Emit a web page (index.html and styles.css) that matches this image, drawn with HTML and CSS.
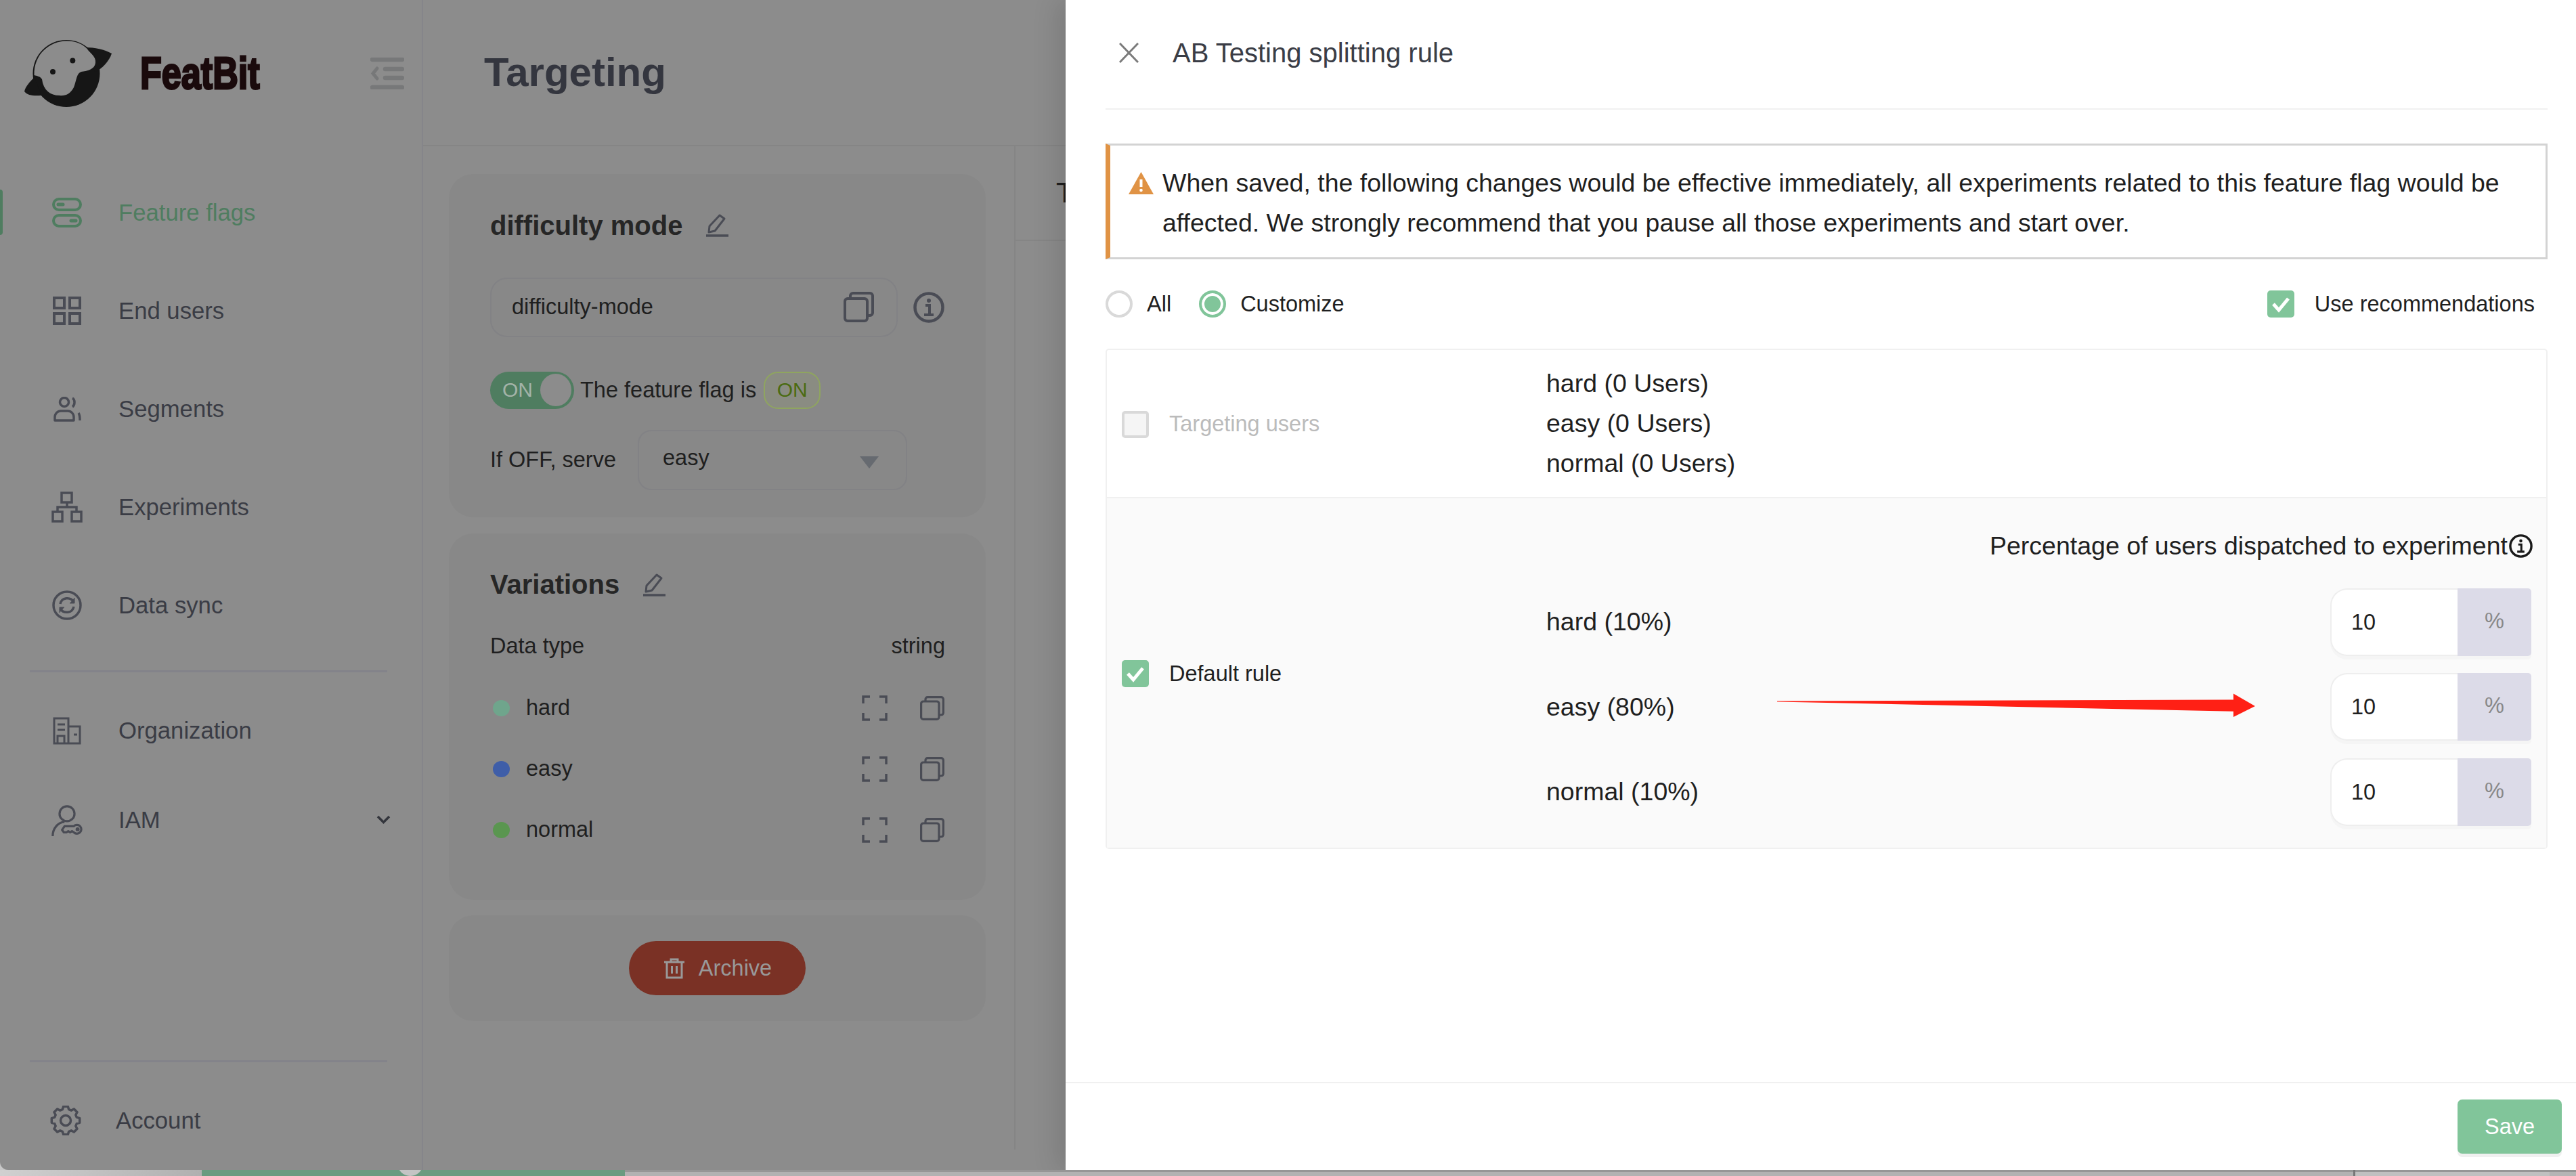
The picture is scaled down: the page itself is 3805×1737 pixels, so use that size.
FILE: index.html
```html
<!DOCTYPE html>
<html lang="en">
<head>
  <meta charset="UTF-8" />
  <title>FeatBit - Targeting</title>
  <link rel="stylesheet" href="styles.css">
</head>
<body>
  <svg class="sprite" xmlns="http://www.w3.org/2000/svg">
    <symbol id="copy" viewBox="0 0 45 45">
      <rect x="2" y="10" width="33" height="33" rx="4" fill="none" stroke="currentColor" stroke-width="4"/>
      <path d="M10 9V6a4 4 0 0 1 4-4h25a4 4 0 0 1 4 4v25a4 4 0 0 1-4 4h-3" fill="none" stroke="currentColor" stroke-width="4"/>
    </symbol>
    <symbol id="edit" viewBox="0 0 33 34">
      <path d="M20 2l7 5L13 25l-9 2 1-9z" fill="none" stroke="currentColor" stroke-width="3" stroke-linejoin="round"/>
      <path d="M0 32h33" stroke="currentColor" stroke-width="3.5"/>
    </symbol>
    <symbol id="expand" viewBox="0 0 38 38">
      <path d="M2 12V2h10M26 2h10v10M36 26v10H26M12 36H2V26" fill="none" stroke="currentColor" stroke-width="3.5"/>
    </symbol>
    <symbol id="info" viewBox="0 0 46 46">
      <circle cx="23" cy="23" r="20.5" fill="none" stroke="currentColor" stroke-width="4.5"/>
      <circle cx="23" cy="13" r="3" fill="currentColor"/>
      <path d="M18 20h6v14M16 34h14" fill="none" stroke="currentColor" stroke-width="4"/>
    </symbol>
    <symbol id="check" viewBox="0 0 40 40">
      <path d="M9 20l8 9 14-17" fill="none" stroke="#fff" stroke-width="5"/>
    </symbol>
  </svg>

  <div class="window">
    <aside class="sidebar">
      <div class="brand">
        <svg class="logo" viewBox="0 0 129 99" width="129" height="99">
          <circle cx="62" cy="49.5" r="49.5" fill="#161616"/>
          <path d="M90 11c14 0 28 3 39 9-4 12-14 22-25 28z" fill="#161616"/>
          <path d="M15 55C8 62 2 68 0 76c4 6 14 7 25 6z" fill="#161616"/>
          <path d="M14.5 52C14 20 38 2 62 1.5c14 0 24 4.5 30.6 11.5C97 20 106 24 105 33.5 104 44 92 46 84 47c-7 2-7 13-11 23-5 10-13 13-21 12-14 0-24-8-26-24-2-4-8-5-11.5-6z" fill="#8c8c8c"/>
          <circle cx="71.3" cy="30.5" r="4" fill="#161616"/>
          <circle cx="42" cy="47" r="4" fill="#161616"/>
        </svg>
        <span class="brand-name">FeatBit</span>
        <svg class="collapse" viewBox="0 0 50 47" width="50" height="47">
          <path d="M3 3h44M22 17h25M22 30h25M3 44h44" stroke="#777879" stroke-width="6.5" stroke-linecap="round"/>
          <path d="M10 16l-6 7.5 6 7.5" fill="none" stroke="#777879" stroke-width="5" stroke-linecap="round"/>
        </svg>
      </div>

      <nav class="nav">
        <a class="nav-item active">
          <span class="nav-icon">
            <svg viewBox="0 0 44 44" width="44" height="44">
              <rect x="2" y="2" width="40" height="16" rx="8" fill="none" stroke="currentColor" stroke-width="4"/>
              <rect x="2" y="26" width="40" height="16" rx="8" fill="none" stroke="currentColor" stroke-width="4"/>
              <path d="M9 10h7M28 34h7" stroke="currentColor" stroke-width="5" stroke-linecap="round"/>
            </svg>
          </span>
          Feature flags
        </a>
        <a class="nav-item">
          <span class="nav-icon">
            <svg viewBox="0 0 42 42" width="42" height="42" fill="none" stroke="currentColor" stroke-width="4">
              <rect x="2" y="2" width="15" height="15"/><rect x="25" y="2" width="15" height="15"/>
              <rect x="2" y="25" width="15" height="15"/><rect x="25" y="25" width="15" height="15"/>
            </svg>
          </span>
          End users
        </a>
        <a class="nav-item">
          <span class="nav-icon">
            <svg viewBox="0 0 41 37" width="41" height="37" fill="none" stroke="currentColor" stroke-width="3.5">
              <circle cx="16" cy="8" r="6.5"/>
              <path d="M2 35v-5c0-5 4-9 9-9h10c5 0 9 4 9 9v5z" stroke-linejoin="round"/>
              <path d="M28 2c4 2 4 10 0 13M37 24c2 3 2 7 2 11"/>
            </svg>
          </span>
          Segments
        </a>
        <a class="nav-item">
          <span class="nav-icon">
            <svg viewBox="0 0 46 46" width="46" height="46" fill="none" stroke="currentColor" stroke-width="3.5">
              <rect x="15" y="2" width="15" height="14"/>
              <rect x="2" y="30" width="14" height="14"/><rect x="30" y="30" width="14" height="14"/>
              <path d="M23 16v7M9 30v-7h28v7"/>
            </svg>
          </span>
          Experiments
        </a>
        <a class="nav-item">
          <span class="nav-icon">
            <svg viewBox="0 0 44 44" width="44" height="44" fill="none" stroke="currentColor" stroke-width="3.5">
              <circle cx="22" cy="22" r="20"/>
              <path d="M12 20c2-10 15-11 20-3M32 24c-2 10-15 11-20 3"/>
              <path d="M33 11v8h-7M11 33v-8h7" fill="currentColor" stroke-width="1"/>
            </svg>
          </span>
          Data sync
        </a>
      </nav>

      <div class="nav-divider nav-divider-top"></div>

      <nav class="nav">
        <a class="nav-item nav-item-short">
          <span class="nav-icon">
            <svg viewBox="0 0 42 41" width="42" height="41" fill="none" stroke="currentColor" stroke-width="3">
              <path d="M2 39V2h21v37zM23 14h17v25H2"/>
              <path d="M7 11h11M7 19h11M31 26h5"/>
              <path d="M7 39V28h10v11"/>
            </svg>
          </span>
          Organization
        </a>
        <a class="nav-item nav-item-short">
          <span class="nav-icon">
            <svg viewBox="0 0 50 50" width="50" height="50" fill="none" stroke="currentColor" stroke-width="3.5">
              <circle cx="25" cy="14" r="12"/>
              <path d="M2 50c0-12 8-22 19-23"/>
              <path d="M17 40l4-6h15a7 7 0 1 1 0 10l-3-2-3 2-3-2-3 2h-4z" stroke-linejoin="round"/>
              <circle cx="42" cy="39" r="1.5"/>
            </svg>
          </span>
          IAM
          <svg class="chevron" viewBox="0 0 21 13" width="21" height="13">
            <path d="M2 2l8.5 8.5L19 2" fill="none" stroke="#33353c" stroke-width="3.5"/>
          </svg>
        </a>
      </nav>

      <div class="sidebar-foot">
        <div class="nav-divider"></div>
        <a class="nav-item account">
          <span class="nav-icon">
            <svg viewBox="0 0 46 44" width="46" height="44" fill="none" stroke="currentColor" stroke-width="3.5">
              <polygon stroke-linejoin="round" points="18.3,5.7 19.7,1.3 26.3,1.3 27.7,5.7 31.2,7.15 35.3,5 40,9.7 37.85,13.8 39.3,17.3 43.7,18.7 43.7,25.3 39.3,26.7 37.85,30.2 40,34.3 35.3,39 31.2,36.85 27.7,38.3 26.3,42.7 19.7,42.7 18.3,38.3 14.8,36.85 10.7,39 6,34.3 8.15,30.2 6.7,26.7 2.3,25.3 2.3,18.7 6.7,17.3 8.15,13.8 6,9.7 10.7,5 14.8,7.15"/>
              <circle cx="23" cy="22" r="7.5"/>
            </svg>
          </span>
          Account
        </a>
      </div>
    </aside>

    <main class="main">
      <header class="page-head"><h1>Targeting</h1></header>
      <div class="page-body">
        <section class="summary">
          <div class="card card-flag">
            <h2 class="card-title">difficulty mode <svg class="edit-icon"><use href="#edit"/></svg></h2>
            <div class="key-row">
              <div class="key-box">
                <span>difficulty-mode</span>
                <svg class="copy-big"><use href="#copy"/></svg>
              </div>
              <svg class="info-big"><use href="#info"/></svg>
            </div>
            <div class="status-row">
              <div class="toggle"><span>ON</span><i></i></div>
              <span class="status-text">The feature flag is</span>
              <span class="status-tag">ON</span>
            </div>
            <div class="off-row">
              <span>If OFF, serve</span>
              <div class="fake-select"><span>easy</span><i></i></div>
            </div>
          </div>

          <div class="card card-vars">
            <h2 class="card-title">Variations <svg class="edit-icon"><use href="#edit"/></svg></h2>
            <div class="data-type"><span>Data type</span><span>string</span></div>
            <div class="var-row">
              <i class="dot dot-hard"></i><span class="var-name">hard</span>
              <svg class="expand-icon"><use href="#expand"/></svg><svg class="copy-small"><use href="#copy"/></svg>
            </div>
            <div class="var-row">
              <i class="dot dot-easy"></i><span class="var-name">easy</span>
              <svg class="expand-icon"><use href="#expand"/></svg><svg class="copy-small"><use href="#copy"/></svg>
            </div>
            <div class="var-row">
              <i class="dot dot-normal"></i><span class="var-name">normal</span>
              <svg class="expand-icon"><use href="#expand"/></svg><svg class="copy-small"><use href="#copy"/></svg>
            </div>
          </div>

          <div class="card card-archive">
            <button class="archive-btn" type="button">
              <svg viewBox="0 0 30 31" width="30" height="31" fill="none" stroke="#999" stroke-width="3">
                <path d="M0 6h30M10 6V2h10v4M4 6v23h22V6M11.5 12v11M18.5 12v11"/>
              </svg>
              Archive
            </button>
          </div>
        </section>
        <section class="rules">
          <div class="rules-tab"><span>T</span></div>
        </section>
      </div>
    </main>

    <aside class="drawer">
      <header class="drawer-head">
        <svg class="close-icon" viewBox="0 0 29 30" width="29" height="30">
          <path d="M1 1l27 28M28 1L1 29" stroke="#7b7b7b" stroke-width="3"/>
        </svg>
        <span class="drawer-title">AB Testing splitting rule</span>
      </header>

      <div class="alert">
        <svg class="alert-icon" viewBox="0 0 37 33" width="37" height="33">
          <path d="M18.5 0L37 33H0z" fill="#e09345"/>
          <path d="M18.5 11v11" stroke="#fff" stroke-width="4"/>
          <circle cx="18.5" cy="27" r="2.3" fill="#fff"/>
        </svg>
        <p>When saved, the following changes would be effective immediately, all experiments related to this feature flag would be affected. We strongly recommend that you pause all those experiments and start over.</p>
      </div>

      <div class="options">
        <label class="radio"><i></i>All</label>
        <label class="radio radio-on"><i></i>Customize</label>
        <label class="use-rec"><span class="box box-on"><svg><use href="#check"/></svg></span>Use recommendations</label>
      </div>

      <div class="split-table">
        <div class="split-row">
          <div class="split-left muted"><span class="box box-off"></span>Targeting users</div>
          <div class="split-users">
            <div>hard (0 Users)</div>
            <div>easy (0 Users)</div>
            <div>normal (0 Users)</div>
          </div>
        </div>
        <div class="split-row split-row-alt">
          <div class="split-left"><span class="box box-on"><svg><use href="#check"/></svg></span>Default rule</div>
          <div class="split-vars">
            <div class="split-note">Percentage of users dispatched to experiment<svg class="info-small"><use href="#info"/></svg></div>
            <div class="split-var">
              <span>hard (10%)</span>
              <div class="pct"><span class="pct-val">10</span><span class="pct-unit">%</span></div>
            </div>
            <div class="split-var">
              <span>easy (80%)</span>
              <svg class="arrow" viewBox="0 0 706 36" width="706" height="36">
                <polygon points="0,11.5 674,9.4 674,0.5 706,19 674,35 674,26.7 0,12.5" fill="#ff2015"/>
              </svg>
              <div class="pct"><span class="pct-val">10</span><span class="pct-unit">%</span></div>
            </div>
            <div class="split-var">
              <span>normal (10%)</span>
              <div class="pct"><span class="pct-val">10</span><span class="pct-unit">%</span></div>
            </div>
          </div>
        </div>
      </div>

      <footer class="drawer-foot">
        <button class="save-btn" type="button">Save</button>
      </footer>
    </aside>
  </div>

  <div class="strip">
    <div class="strip-a"></div>
    <div class="strip-b"><i></i></div>
    <div class="strip-c"></div>
    <div class="strip-d"></div>
    <div class="strip-e"></div>
  </div>
</body>
</html>
```

FILE: styles.css
```css
* {
  box-sizing: border-box;
}
html,
body {
  margin: 0;
  height: 1737px;
  overflow: hidden;
}
body {
  background-color: #c8c8c8;
  font-family: "Liberation Sans", Arial, sans-serif;
  font-size: 32.5px;
  color: #1f1f1f;
}
.sprite {
  display: none;
}
.window {
  display: flex;
  height: 1728px;
  border-bottom-left-radius: 12px;
  overflow: hidden;
  background-color: #8c8c8c;
}

/* Sidebar */
.sidebar {
  display: flex;
  flex-direction: column;
  flex: 0 0 625px;
  border-right: 2px solid #85858a;
  color: #3a3c45;
}
.brand {
  display: flex;
  align-items: center;
  height: 241.5px;
  padding: 0 26px 25px 36px;
}
.brand-name {
  display: inline-block;
  margin-left: 42px;
  font-size: 66px;
  font-weight: 700;
  line-height: 1;
  color: #1a0a0c;
  -webkit-text-stroke: 3px #1a0a0c;
  transform: scaleX(0.79);
  transform-origin: left center;
}
.collapse {
  margin-left: auto;
}
.nav-item {
  position: relative;
  display: flex;
  align-items: center;
  height: 145px;
  padding-left: 76px;
  font-size: 34.7px;
  color: #3a3c45;
}
.nav-item-short {
  height: 132px;
}
.nav-item.active {
  color: #4f7d60;
}
.nav-item.active::before {
  content: "";
  position: absolute;
  left: 0;
  top: 38.5px;
  width: 4px;
  height: 67px;
  background-color: #4f7d60;
  border-radius: 0 4px 4px 0;
}
.nav-icon {
  display: flex;
  justify-content: center;
  align-items: center;
  flex: 0 0 46px;
  min-width: 0;
  margin-right: 53px;
  color: #4a4c55;
}
.nav-item.active .nav-icon {
  color: #4f7d60;
}
.chevron {
  position: absolute;
  left: 556px;
  top: 58px;
}
.nav-divider {
  height: 3px;
  margin: 0 51px 0 44px;
  background-color: #83838a;
}
.nav-divider-top {
  margin-top: 23px;
  margin-bottom: 21px;
}
.sidebar-foot {
  margin-top: auto;
  height: 162px;
}
.account {
  height: 146px;
  margin-top: 13px;
  padding-left: 74px;
}
.account .nav-icon {
  margin-right: 51px;
}

/* Targeting page behind the drawer */
.main {
  flex: 0 0 949px;
  overflow: hidden;
}
.page-head {
  display: flex;
  align-items: center;
  height: 216px;
  padding: 0 0 0 90px;
  border-bottom: 2px solid #858585;
}
.page-head h1 {
  margin: 0 0 2px;
  font-size: 60px;
  color: #34363f;
}
.page-body {
  display: flex;
  height: 1482px;
}
.summary {
  flex: 0 0 873px;
  padding: 41px 42px 0 38px;
}
.card {
  margin-bottom: 23.5px;
  padding: 53px 60px 0 61px;
  background-color: #888888;
  border-radius: 36px;
}
.card-flag {
  height: 507px;
}
.card-vars {
  height: 541px;
}
.card-archive {
  display: flex;
  justify-content: center;
  align-items: center;
  height: 156px;
  padding: 0;
}
.card-title {
  display: flex;
  align-items: center;
  height: 46px;
  margin: 0;
  font-size: 40px;
  color: #262626;
}
.edit-icon {
  width: 33px;
  height: 34px;
  margin-left: 35px;
  color: #4a4c55;
}
.key-row {
  display: flex;
  align-items: center;
  margin-top: 53.5px;
}
.key-box {
  display: flex;
  justify-content: space-between;
  align-items: center;
  width: 602px;
  height: 88px;
  padding: 0 33px 0 30px;
  border: 2px solid #828285;
  border-radius: 25px;
}
.copy-big {
  width: 45px;
  height: 45px;
  color: #4a4c55;
}
.info-big {
  width: 46px;
  height: 46px;
  margin-left: 23px;
  color: #4a4c55;
}
.status-row {
  display: flex;
  align-items: center;
  height: 55px;
  margin-top: 51px;
}
.toggle {
  display: flex;
  justify-content: space-between;
  align-items: center;
  width: 124px;
  height: 55px;
  padding: 0 4px 0 18px;
  background-color: #4f7d60;
  border-radius: 28px;
  color: #a3b3a8;
  font-size: 30px;
}
.toggle i {
  width: 46px;
  height: 48px;
  background-color: #8c8c8c;
  border-radius: 50%;
}
.status-text {
  margin: 0 11px 0 9px;
}
.status-tag {
  display: flex;
  align-items: center;
  justify-content: center;
  width: 84px;
  height: 55px;
  border: 2px solid #8fa55f;
  border-radius: 21px;
  background-color: #8a8c82;
  color: #4b6b12;
  font-size: 30px;
}
.off-row {
  display: flex;
  align-items: center;
  height: 89px;
  margin-top: 31px;
}
.fake-select {
  display: flex;
  justify-content: space-between;
  align-items: center;
  width: 398px;
  height: 89px;
  margin-left: 32px;
  padding: 0 40px 0 35px;
  border: 2px solid #828285;
  border-radius: 20px;
}
.fake-select span {
  margin-top: -6px;
}
.fake-select i {
  margin-top: 8px;
  border-left: 14px solid transparent;
  border-right: 14px solid transparent;
  border-top: 18px solid #666a70;
}
.data-type {
  display: flex;
  justify-content: space-between;
  align-items: center;
  height: 40px;
  margin-top: 48px;
  margin-bottom: 26px;
}
.var-row {
  display: flex;
  align-items: center;
  height: 90px;
}
.dot {
  width: 25px;
  height: 24px;
  margin-left: 4px;
  border-radius: 50%;
}
.dot-hard {
  background-color: #6fa58c;
}
.dot-easy {
  background-color: #3f5ea8;
}
.dot-normal {
  background-color: #5a9650;
}
.var-name {
  margin-left: 24px;
}
.expand-icon {
  width: 38px;
  height: 38px;
  margin-left: auto;
  color: #4a4c55;
}
.copy-small {
  width: 36px;
  height: 36px;
  margin-left: 48px;
  margin-right: 1px;
  color: #4a4c55;
}
.archive-btn {
  display: flex;
  align-items: center;
  justify-content: center;
  gap: 21px;
  width: 261px;
  height: 80px;
  padding-left: 8px;
  border: none;
  border-radius: 40px;
  background-color: #7a3125;
  color: #999999;
  font-family: inherit;
  font-size: 32.5px;
}
.rules {
  flex: 1;
  height: 1482px;
  border-left: 2px solid #858585;
  overflow: hidden;
}
.rules-tab {
  display: flex;
  align-items: center;
  height: 140px;
  padding: 0 0 0 60px;
  border-bottom: 2px solid #858585;
  white-space: nowrap;
  font-size: 42px;
  color: #1f1f1f;
}

/* AB testing drawer */
.drawer {
  position: relative;
  display: flex;
  flex-direction: column;
  flex: 0 0 2231px;
  padding: 0 42px 0 59px;
  background-color: #ffffff;
  box-shadow: -12px 0 36px rgb(0 0 0 / 0.12);
}
.drawer-head {
  display: flex;
  align-items: center;
  height: 162px;
  padding: 0 0 4px 20px;
  border-bottom: 2px solid #f0f0f0;
}
.drawer-title {
  margin-left: 50px;
  font-size: 40px;
  color: #3a3d46;
}
.alert {
  display: flex;
  height: 171px;
  margin-top: 50px;
  padding: 26px 20px 0 27px;
  border: 3px solid #d3d3d3;
  border-left: 7px solid #e09345;
  font-size: 37.5px;
  line-height: 59px;
}
.alert p {
  margin: 0 0 0 13px;
}
.alert-icon {
  flex: none;
  margin-top: 13px;
}
.options {
  display: flex;
  align-items: center;
  height: 40px;
  margin-top: 46px;
}
.radio {
  display: flex;
  align-items: center;
  margin-right: 41px;
}
.radio i {
  width: 40px;
  height: 40px;
  margin-right: 21px;
  border: 4px solid #d9d9d9;
  border-radius: 50%;
}
.radio-on i {
  border-color: #81c59a;
  background-color: #81c59a;
  box-shadow: inset 0 0 0 4px #ffffff;
}
.use-rec {
  display: flex;
  align-items: center;
  margin-left: auto;
  margin-right: 19px;
  font-size: 32.5px;
}
.box {
  display: block;
  flex: none;
  width: 40px;
  height: 40px;
  margin-right: 30px;
  border-radius: 5px;
}
.box svg {
  display: block;
  width: 40px;
  height: 40px;
}
.box-on {
  background-color: #81c59a;
}
.box-off {
  border: 4px solid #d9d9d9;
  background-color: #f5f5f5;
}
.split-table {
  height: 739px;
  margin-top: 46px;
  border: 2px solid #f0f0f0;
  border-radius: 5px;
}
.split-row {
  display: flex;
  height: 219px;
  border-bottom: 2px solid #f0f0f0;
}
.split-row-alt {
  height: 516px;
  border-bottom: none;
  background-color: #fafafa;
}
.split-left {
  display: flex;
  align-items: center;
  flex: 0 0 649px;
  padding: 2px 0 0 22px;
}
.muted {
  color: #bbbbbb;
}
.split-users {
  display: flex;
  flex-direction: column;
  justify-content: center;
  font-size: 37.5px;
  line-height: 59px;
}
.split-vars {
  flex: 1;
  padding: 47px 20px 0 0;
  font-size: 37.5px;
}
.split-note {
  display: flex;
  justify-content: flex-end;
  align-items: center;
  height: 46px;
  margin-bottom: 27px;
  white-space: nowrap;
}
.info-small {
  width: 35px;
  height: 35px;
  margin: 0 0 0 2px;
  color: #1a1a1a;
}
.split-var {
  position: relative;
  display: flex;
  justify-content: space-between;
  align-items: center;
  height: 125.5px;
}
.arrow {
  position: absolute;
  left: 341px;
  top: 42.5px;
}
.pct {
  display: flex;
  width: 297px;
  height: 100px;
  margin-right: 2px;
  font-size: 32.5px;
  box-shadow: 0 5px 0 #f5f5f5;
  border-radius: 25px 5px 5px 25px;
}
.pct-val {
  flex: 1;
  padding: 30px 0 0 29px;
  background-color: #ffffff;
  border: 2px solid #eeeeee;
  border-right: none;
  border-radius: 25px 0 0 25px;
}
.pct-unit {
  flex: 0 0 109px;
  padding-top: 30px;
  text-align: center;
  background-color: #dcdbe8;
  border-radius: 0 5px 5px 0;
  color: #888888;
}
.drawer-foot {
  display: flex;
  justify-content: flex-end;
  height: 130px;
  margin: auto -42px 0 -59px;
  padding: 24px 21px 0 0;
  border-top: 2px solid #f0f0f0;
}
.save-btn {
  width: 154px;
  height: 80px;
  border: none;
  border-radius: 7px;
  background-color: #81c59a;
  color: #ffffff;
  font-family: inherit;
  font-size: 32.5px;
  box-shadow: 0 5px 0 #f0f0f0;
}

/* Sliver of the window underneath at the bottom edge */
.strip {
  display: flex;
  height: 9px;
}
.strip-a {
  flex: 0 0 298px;
  background: linear-gradient(to right, #d0d0d0, #b0b0b0);
}
.strip-b {
  position: relative;
  flex: 0 0 625px;
  overflow: hidden;
  background-color: #6a9b80;
}
.strip-b i {
  position: absolute;
  left: 289px;
  top: -10px;
  width: 38px;
  height: 19px;
  border-radius: 0 0 19px 19px;
  background-color: #c4c4c4;
}
.strip-c {
  flex: 0 0 2553px;
  background: linear-gradient(to bottom, #969696 3px, #b2b2b2 3px);
}
.strip-d {
  flex: 0 0 290px;
  border-left: 3px solid #777777;
  background: linear-gradient(to bottom, #969696 3px, #c0c0c0 3px);
}
.strip-e {
  flex: 1;
  background: linear-gradient(to bottom, #969696 3px, #b5b5b5 3px);
}
```
